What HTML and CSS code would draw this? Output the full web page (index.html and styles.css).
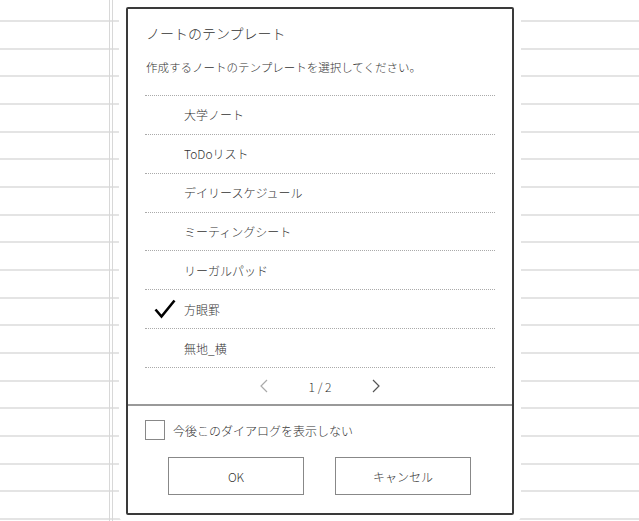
FILE: index.html
```html
<!DOCTYPE html>
<html lang="ja">
<head>
<meta charset="utf-8" />
<title>ノートのテンプレート</title>
<link rel="stylesheet" href="styles.css">
</head>
<body>
<div class="notebook">
  <div class="margin-rule"></div>
</div>
<div class="dialog">
  <h1 class="dialog-title">ノートのテンプレート</h1>
  <p class="dialog-text">作成するノートのテンプレートを選択してください。</p>
  <ul class="template-list">
    <li class="template"><span class="mark"></span>大学ノート</li>
    <li class="template"><span class="mark"></span>ToDoリスト</li>
    <li class="template"><span class="mark"></span>デイリースケジュール</li>
    <li class="template"><span class="mark"></span>ミーティングシート</li>
    <li class="template"><span class="mark"></span>リーガルパッド</li>
    <li class="template selected"><span class="mark"><svg width="22" height="20" viewBox="0 0 22 20"><path d="M1.5 10.5 L7.5 17.5 L20.5 1.5" fill="none" stroke="#000" stroke-width="2.6" stroke-linejoin="miter"/></svg></span>方眼罫</li>
    <li class="template"><span class="mark"></span>無地_横</li>
  </ul>
  <div class="pager">
    <svg class="chev" width="8" height="14" viewBox="0 0 8 14"><path d="M7 1 L1 7 L7 13" fill="none" stroke="#aaa" stroke-width="1.2"/></svg>
    <span class="page-num">1 / 2</span>
    <svg class="chev" width="8" height="14" viewBox="0 0 8 14"><path d="M1 1 L7 7 L1 13" fill="none" stroke="#555" stroke-width="1.2"/></svg>
  </div>
  <div class="dialog-foot">
    <label class="dont-show"><span class="box"></span>今後このダイアログを表示しない</label>
    <div class="actions">
      <button class="btn">OK</button>
      <button class="btn">キャンセル</button>
    </div>
  </div>
</div>
</body>
</html>
```
FILE: styles.css
```css
*{box-sizing:border-box;}
html,body{height:100%;}
body{
  margin:0;
  background:#fff;
  font-family:"Noto Sans CJK JP","Noto Sans",sans-serif;
  font-weight:300;
  color:#333;
  overflow:hidden;
}
.notebook{
  height:100%;
  background:repeating-linear-gradient(to bottom,transparent 0,transparent 20px,#e4e4e4 20px,#e4e4e4 22px,transparent 22px,transparent 27.67px);
}
.margin-rule{
  margin-left:109px;
  width:4px;
  height:100%;
  border-left:1px solid #d8d8d8;
  border-right:1px solid #d8d8d8;
}
.dialog{
  position:absolute;
  left:126px;
  top:7px;
  width:388px;
  height:508px;
  background:#fff;
  border:2px solid #3a3a3a;
  border-radius:2px;
  box-shadow:0 0 0 7px #fff;
  display:flex;
  flex-direction:column;
}
.dialog-title{
  margin:14px 0 0 18px;
  font-size:14px;
  font-weight:300;
  line-height:20px;
}
.dialog-text{
  margin:15px 0 0 18px;
  font-size:11.5px;
  line-height:18px;
}
.template-list{
  list-style:none;
  margin:19px 17px 0 17px;
  padding:0;
  border-top:1px dotted #aaa;
}
.template{
  display:flex;
  align-items:center;
  height:38.86px;
  border-bottom:1px dotted #aaa;
  font-size:12px;
}
.mark{
  width:39px;
  display:flex;
  justify-content:flex-end;
  padding-right:8px;
}
.mark svg{display:block;}
.pager{
  display:flex;
  align-items:center;
  justify-content:center;
  gap:41px;
  height:38px;
  border-bottom:2px solid #999;
  font-size:12px;
}
.page-num{white-space:nowrap;}
.chev{display:block;}
.dialog-foot{
  padding:14px 18px 0 17px;
  display:flex;
  flex-direction:column;
  gap:17px;
}
.dont-show{
  display:flex;
  align-items:center;
  gap:8px;
  font-size:12px;
}
.box{
  width:20px;
  height:20px;
  border:1px solid #888;
}
.actions{
  display:flex;
  justify-content:center;
  gap:31px;
}
.btn{
  width:136px;
  height:38px;
  background:#fff;
  border:1px solid #888;
  border-radius:0;
  font-family:inherit;
  font-weight:300;
  font-size:12px;
  color:#333;
}
```
